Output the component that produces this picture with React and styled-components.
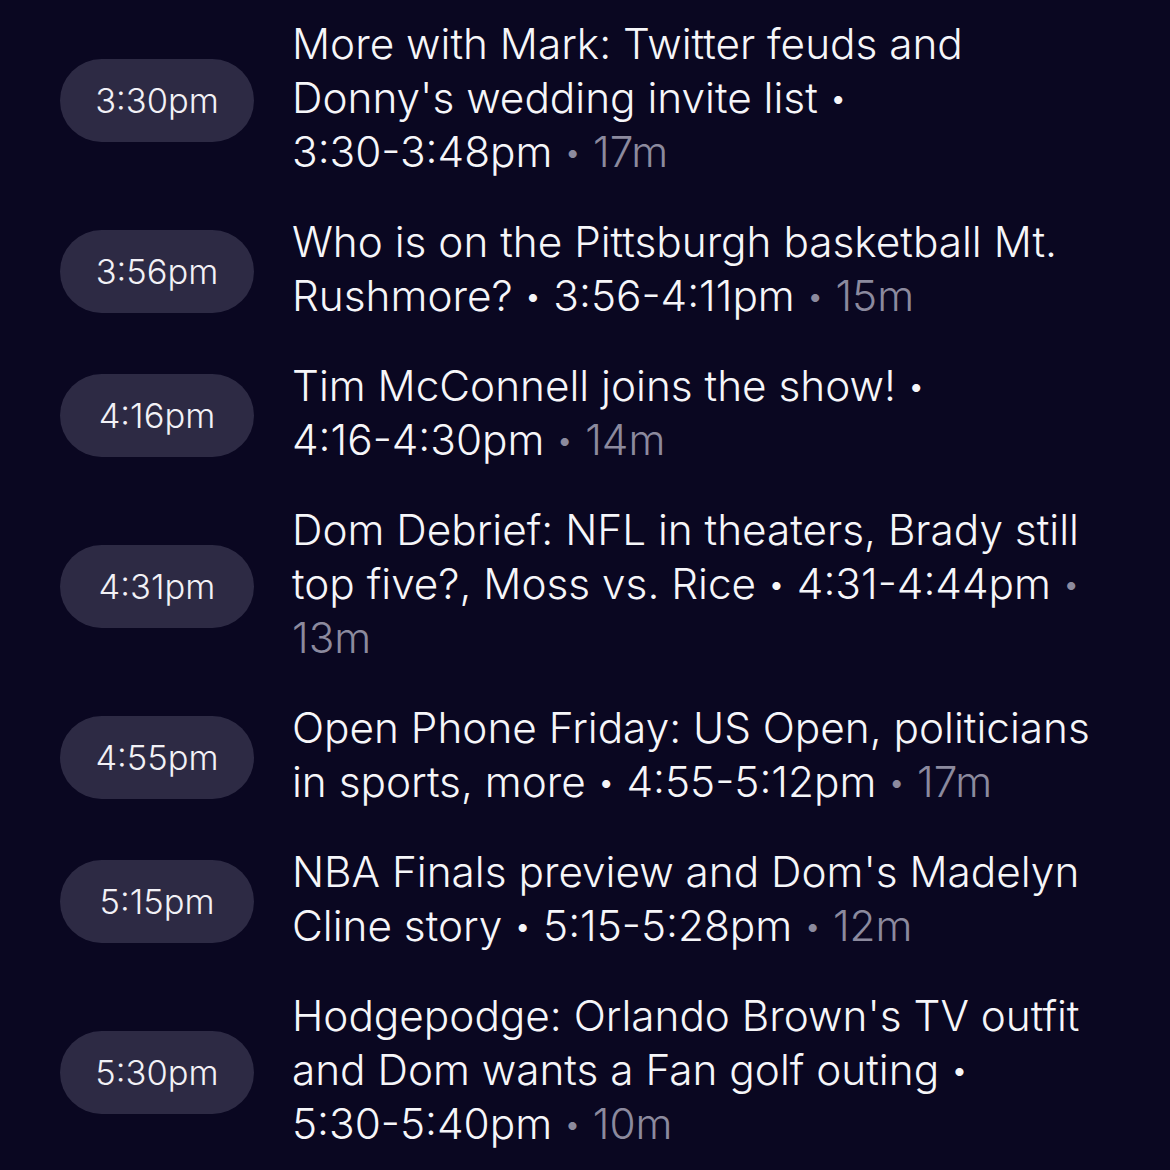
import React from 'react';
import styled, { createGlobalStyle } from 'styled-components';

const GlobalStyle = createGlobalStyle`
  html, body {
    margin: 0;
    padding: 0;
    background: #0a0721;
  }
  body {
    font-family: Inter, "Liberation Sans", sans-serif;
    -webkit-font-smoothing: antialiased;
  }
`;

const List = styled.div`
  display: flex;
  flex-direction: column;
  gap: 36px;
  padding: 17px 0 0 60px;
  min-height: 1170px;
  box-sizing: border-box;
`;

const Row = styled.div`
  display: flex;
  align-items: center;
  gap: 38px;
`;

const Pill = styled.div`
  flex: 0 0 194px;
  height: 83px;
  margin-top: 5px;
  border-radius: 42px;
  background: #2d2a44;
  color: #f2f1f6;
  font-size: 34.5px;
  font-weight: 300;
  display: flex;
  align-items: center;
  justify-content: center;
`;

const Title = styled.div`
  width: 814px;
  color: #f6f6f9;
  font-size: 42.3px;
  font-weight: 300;
  line-height: 54px;
`;

const Range = styled.span`
  white-space: nowrap;
`;

const Dot = styled.span`
  font-size: 30px;
  line-height: 0;
  vertical-align: 4px;
  color: ${p => (p.muted ? '#8c8a9e' : '#f6f6f9')};
`;

const Muted = styled.span`
  color: #8c8a9e;
`;

const segments = [
  { start: '3:30pm', title: "More with Mark: Twitter feuds and Donny's wedding invite list", range: '3:30-3:48pm', len: '17m' },
  { start: '3:56pm', title: 'Who is on the Pittsburgh basketball Mt. Rushmore?', range: '3:56-4:11pm', len: '15m' },
  { start: '4:16pm', title: 'Tim McConnell joins the show!', range: '4:16-4:30pm', len: '14m' },
  { start: '4:31pm', title: 'Dom Debrief: NFL in theaters, Brady still top five?, Moss vs. Rice', range: '4:31-4:44pm', len: '13m' },
  { start: '4:55pm', title: 'Open Phone Friday: US Open, politicians in sports, more', range: '4:55-5:12pm', len: '17m' },
  { start: '5:15pm', title: "NBA Finals preview and Dom's Madelyn Cline story", range: '5:15-5:28pm', len: '12m' },
  { start: '5:30pm', title: "Hodgepodge: Orlando Brown's TV outfit and Dom wants a Fan golf outing", range: '5:30-5:40pm', len: '10m' },
];

function App() {
  return (
    <>
      <GlobalStyle />
      <List>
        {segments.map(s => (
          <Row key={s.start}>
            <Pill>{s.start}</Pill>
            <Title>
              {s.title} <Dot>•</Dot> <Range>{s.range}</Range> <Dot muted>•</Dot> <Muted>{s.len}</Muted>
            </Title>
          </Row>
        ))}
      </List>
    </>
  );
}

export default App;
